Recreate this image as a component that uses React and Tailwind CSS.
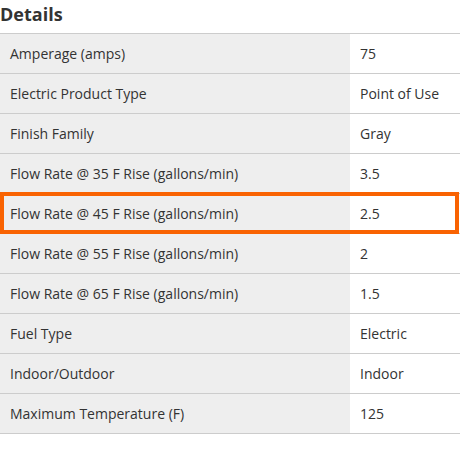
import React from "react";

const specs = [
    ["Amperage (amps)", "75"],
    ["Electric Product Type", "Point of Use"],
    ["Finish Family", "Gray"],
    ["Flow Rate @ 35 F Rise (gallons/min)", "3.5"],
    ["Flow Rate @ 45 F Rise (gallons/min)", "2.5", true],
    ["Flow Rate @ 55 F Rise (gallons/min)", "2"],
    ["Flow Rate @ 65 F Rise (gallons/min)", "1.5"],
    ["Fuel Type", "Electric"],
    ["Indoor/Outdoor", "Indoor"],
    ["Maximum Temperature (F)", "125"],
];

export default function App() {
    return (
        <div
            className="w-[460px] h-[460px] bg-white text-[#333]"
            style={{ fontFamily: '"Open Sans", sans-serif' }}
        >
            {/* Heading */}
            <div className="h-[33px] pt-[2px]">
                <h2 className="text-[18px] leading-6 font-bold">Details</h2>
            </div>

            {/* Spec table */}
            <div className="border-t border-[#cccccc]">
                {specs.map(([label, value, highlight]) => (
                    <div
                        key={label}
                        className="relative flex h-10 border-b border-[#cccccc] text-[14px]"
                    >
                        <div className="w-[350px] bg-[#eeeeee] pl-[10px] flex items-center">
                            {label}
                        </div>
                        <div className="flex-1 pl-[10px] flex items-center">
                            {value}
                        </div>
                        {highlight && (
                            <div className="absolute left-0 right-[1px] top-[-2px] bottom-[-1px] border-4 border-[#f96302]" />
                        )}
                    </div>
                ))}
            </div>
        </div>
    );
}
